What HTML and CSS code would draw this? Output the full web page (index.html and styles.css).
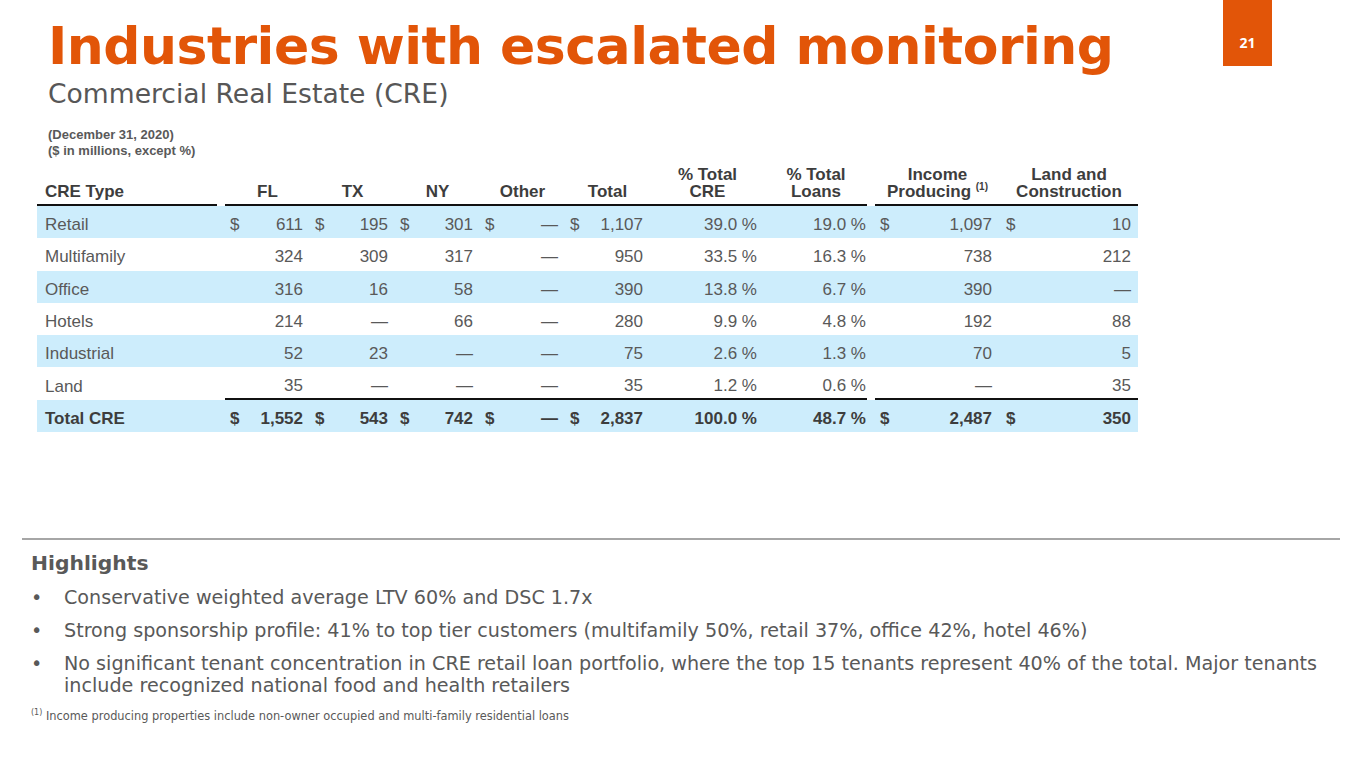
FILE: index.html
```html
<!DOCTYPE html>
<html lang="en">
<head>
<meta charset="utf-8">
<title>Industries with escalated monitoring</title>
<link rel="stylesheet" href="styles.css">
</head>
<body>
<div class="page">
  <header class="top">
    <h1 class="title">Industries with escalated monitoring</h1>
    <div class="badge">21</div>
  </header>
  <h2 class="subtitle">Commercial Real Estate (CRE)</h2>
  <div class="notes">
    <div>(December 31, 2020)</div>
    <div>($ in millions, except %)</div>
  </div>
  <table class="cre">
    <colgroup>
      <col class="w-label"><col class="w-gap">
      <col class="w-m"><col class="w-m"><col class="w-m"><col class="w-m"><col class="w-m">
      <col class="w-pc"><col class="w-pl"><col class="w-gap">
      <col class="w-inc"><col class="w-land">
    </colgroup>
    <thead>
      <tr>
        <th class="lab">CRE Type</th><th class="gap"></th>
        <th>FL</th><th>TX</th><th>NY</th><th>Other</th><th>Total</th>
        <th>% Total<br>CRE</th><th>% Total<br>Loans</th><th class="gap"></th>
        <th>Income<br>Producing <sup>(1)</sup></th><th>Land and<br>Construction</th>
      </tr>
    </thead>
    <tbody>
      <tr class="alt">
        <td class="lab">Retail</td><td class="gap"></td>
        <td class="m"><span class="d">$</span>611</td>
        <td class="m"><span class="d">$</span>195</td>
        <td class="m"><span class="d">$</span>301</td>
        <td class="m"><span class="d">$</span>—</td>
        <td class="m"><span class="d">$</span>1,107</td>
        <td class="pc">39.0 %</td><td class="pl">19.0 %</td><td class="gap"></td>
        <td class="inc"><span class="d">$</span>1,097</td>
        <td class="land"><span class="d">$</span>10</td>
      </tr>
      <tr>
        <td class="lab">Multifamily</td><td class="gap"></td>
        <td class="m">324</td><td class="m">309</td><td class="m">317</td><td class="m">—</td><td class="m">950</td>
        <td class="pc">33.5 %</td><td class="pl">16.3 %</td><td class="gap"></td>
        <td class="inc">738</td><td class="land">212</td>
      </tr>
      <tr class="alt">
        <td class="lab">Office</td><td class="gap"></td>
        <td class="m">316</td><td class="m">16</td><td class="m">58</td><td class="m">—</td><td class="m">390</td>
        <td class="pc">13.8 %</td><td class="pl">6.7 %</td><td class="gap"></td>
        <td class="inc">390</td><td class="land">—</td>
      </tr>
      <tr>
        <td class="lab">Hotels</td><td class="gap"></td>
        <td class="m">214</td><td class="m">—</td><td class="m">66</td><td class="m">—</td><td class="m">280</td>
        <td class="pc">9.9 %</td><td class="pl">4.8 %</td><td class="gap"></td>
        <td class="inc">192</td><td class="land">88</td>
      </tr>
      <tr class="alt">
        <td class="lab">Industrial</td><td class="gap"></td>
        <td class="m">52</td><td class="m">23</td><td class="m">—</td><td class="m">—</td><td class="m">75</td>
        <td class="pc">2.6 %</td><td class="pl">1.3 %</td><td class="gap"></td>
        <td class="inc">70</td><td class="land">5</td>
      </tr>
      <tr class="before-total">
        <td class="lab">Land</td><td class="gap"></td>
        <td class="m">35</td><td class="m">—</td><td class="m">—</td><td class="m">—</td><td class="m">35</td>
        <td class="pc">1.2 %</td><td class="pl">0.6 %</td><td class="gap"></td>
        <td class="inc">—</td><td class="land">35</td>
      </tr>
      <tr class="alt total">
        <td class="lab">Total CRE</td><td class="gap"></td>
        <td class="m"><span class="d">$</span>1,552</td>
        <td class="m"><span class="d">$</span>543</td>
        <td class="m"><span class="d">$</span>742</td>
        <td class="m"><span class="d">$</span>—</td>
        <td class="m"><span class="d">$</span>2,837</td>
        <td class="pc">100.0 %</td><td class="pl">48.7 %</td><td class="gap"></td>
        <td class="inc"><span class="d">$</span>2,487</td>
        <td class="land"><span class="d">$</span>350</td>
      </tr>
    </tbody>
  </table>

  <section class="highlights">
    <h3 class="hl-title">Highlights</h3>
    <ul class="bullets">
      <li>Conservative weighted average LTV 60% and DSC 1.7x</li>
      <li>Strong sponsorship profile: 41% to top tier customers (multifamily 50%, retail 37%, office 42%, hotel 46%)</li>
      <li>No significant tenant concentration in CRE retail loan portfolio, where the top 15 tenants represent 40% of the total. Major tenants<br>include recognized national food and health retailers</li>
    </ul>
    <p class="footnote"><sup>(1)</sup> Income producing properties include non-owner occupied and multi-family residential loans</p>
  </section>
</div>
</body>
</html>
```

FILE: styles.css
```css
* { box-sizing: border-box; }

html, body {
  margin: 0;
  padding: 0;
  background: #ffffff;
}

.page {
  width: 1365px;
  height: 768px;
  overflow: hidden;
  background: #ffffff;
}

/* ---------- header ---------- */
.top {
  display: flex;
  align-items: flex-start;
}

.title {
  margin: 0 0 0 48px;
  padding-top: 13px;
  font-family: "DejaVu Sans", Verdana, sans-serif;
  font-weight: bold;
  font-size: 52px;
  letter-spacing: -0.5px;
  line-height: 66px;
  height: 78px;
  color: #e25508;
  white-space: nowrap;
}

.badge {
  margin-left: auto;
  margin-right: 93px;
  width: 49px;
  height: 66px;
  background: #e25508;
  color: #ffffff;
  font-family: "Open Sans", "Liberation Sans", sans-serif;
  font-weight: bold;
  font-size: 14px;
  display: flex;
  align-items: flex-end;
  justify-content: center;
  padding-bottom: 14px;
}

.subtitle {
  margin: 1px 0 0 48px;
  font-family: "DejaVu Sans", Verdana, sans-serif;
  font-weight: normal;
  font-size: 26.6px;
  line-height: 30px;
  color: #575757;
}

.notes {
  margin: 18px 0 0 48px;
  font-family: "Liberation Sans", Arial, sans-serif;
  font-weight: bold;
  font-size: 13px;
  line-height: 16px;
  color: #595959;
}

/* ---------- table ---------- */
.cre {
  margin: 2px 0 0 37px;
  width: 1101px;
  table-layout: fixed;
  border-collapse: separate;
  border-spacing: 0;
  font-family: "Liberation Sans", Arial, sans-serif;
  font-size: 17px;
  line-height: 17px;
  color: #595959;
}

.w-label { width: 180px; }
.w-gap { width: 8px; }
.w-m { width: 85px; }
.w-pc { width: 115px; }
.w-pl { width: 102px; }
.w-inc { width: 125px; }
.w-land { width: 138px; }

.cre th {
  font-weight: bold;
  color: #3d3d3d;
  text-align: center;
  vertical-align: bottom;
  padding: 0 0 4px 0;
  height: 45px;
  border-bottom: 2px solid #111111;
}

.cre th.lab { text-align: left; padding-left: 8px; }
.cre th.gap, .cre td.gap { border-bottom: none; }

.cre th sup {
  font-size: 10px;
  line-height: 0;
  vertical-align: 7px;
  font-weight: bold;
}

.cre td {
  height: 32.3px;
  padding: 5px 0 0 0;
  vertical-align: middle;
  white-space: nowrap;
}

.cre tr.alt td { background: #cdedfc; }

.cre td.lab { padding-left: 8px; }

.cre td.m { text-align: right; padding-left: 5px; padding-right: 7px; }
.cre td.pc { text-align: right; padding-right: 8px; }
.cre td.pl { text-align: right; padding-right: 1px; }
.cre td.inc { text-align: right; padding-left: 5px; padding-right: 8px; }
.cre td.land { text-align: right; padding-left: 6px; padding-right: 7px; }

.cre .d { float: left; }

.cre tr.before-total td.m,
.cre tr.before-total td.pc,
.cre tr.before-total td.pl,
.cre tr.before-total td.inc,
.cre tr.before-total td.land {
  border-bottom: 2px solid #111111;
}

.cre tr.total td {
  font-weight: bold;
  color: #3d3d3d;
}

/* ---------- highlights ---------- */
.highlights {
  margin: 106px 25px 0 22px;
  border-top: 2px solid #a6a6a6;
  padding: 11px 0 0 9px;
  font-family: "DejaVu Sans", Verdana, sans-serif;
  color: #595959;
}

.hl-title {
  margin: 0;
  font-size: 20.3px;
  line-height: 24px;
  font-weight: bold;
  color: #595959;
}

.bullets {
  list-style: none;
  margin: 12px 0 0 0;
  padding: 0;
}

.bullets li {
  position: relative;
  padding-left: 33px;
  font-size: 19.15px;
  line-height: 22px;
  margin-bottom: 11px;
}

.bullets li::before {
  content: "•";
  position: absolute;
  left: 0;
  top: 0;
}

.bullets li:last-child { margin-bottom: 0; }

.footnote {
  margin: 12px 0 0 0;
  font-size: 11.4px;
  line-height: 14px;
}

.footnote sup {
  font-size: 8px;
  line-height: 0;
  vertical-align: 5px;
}
```
